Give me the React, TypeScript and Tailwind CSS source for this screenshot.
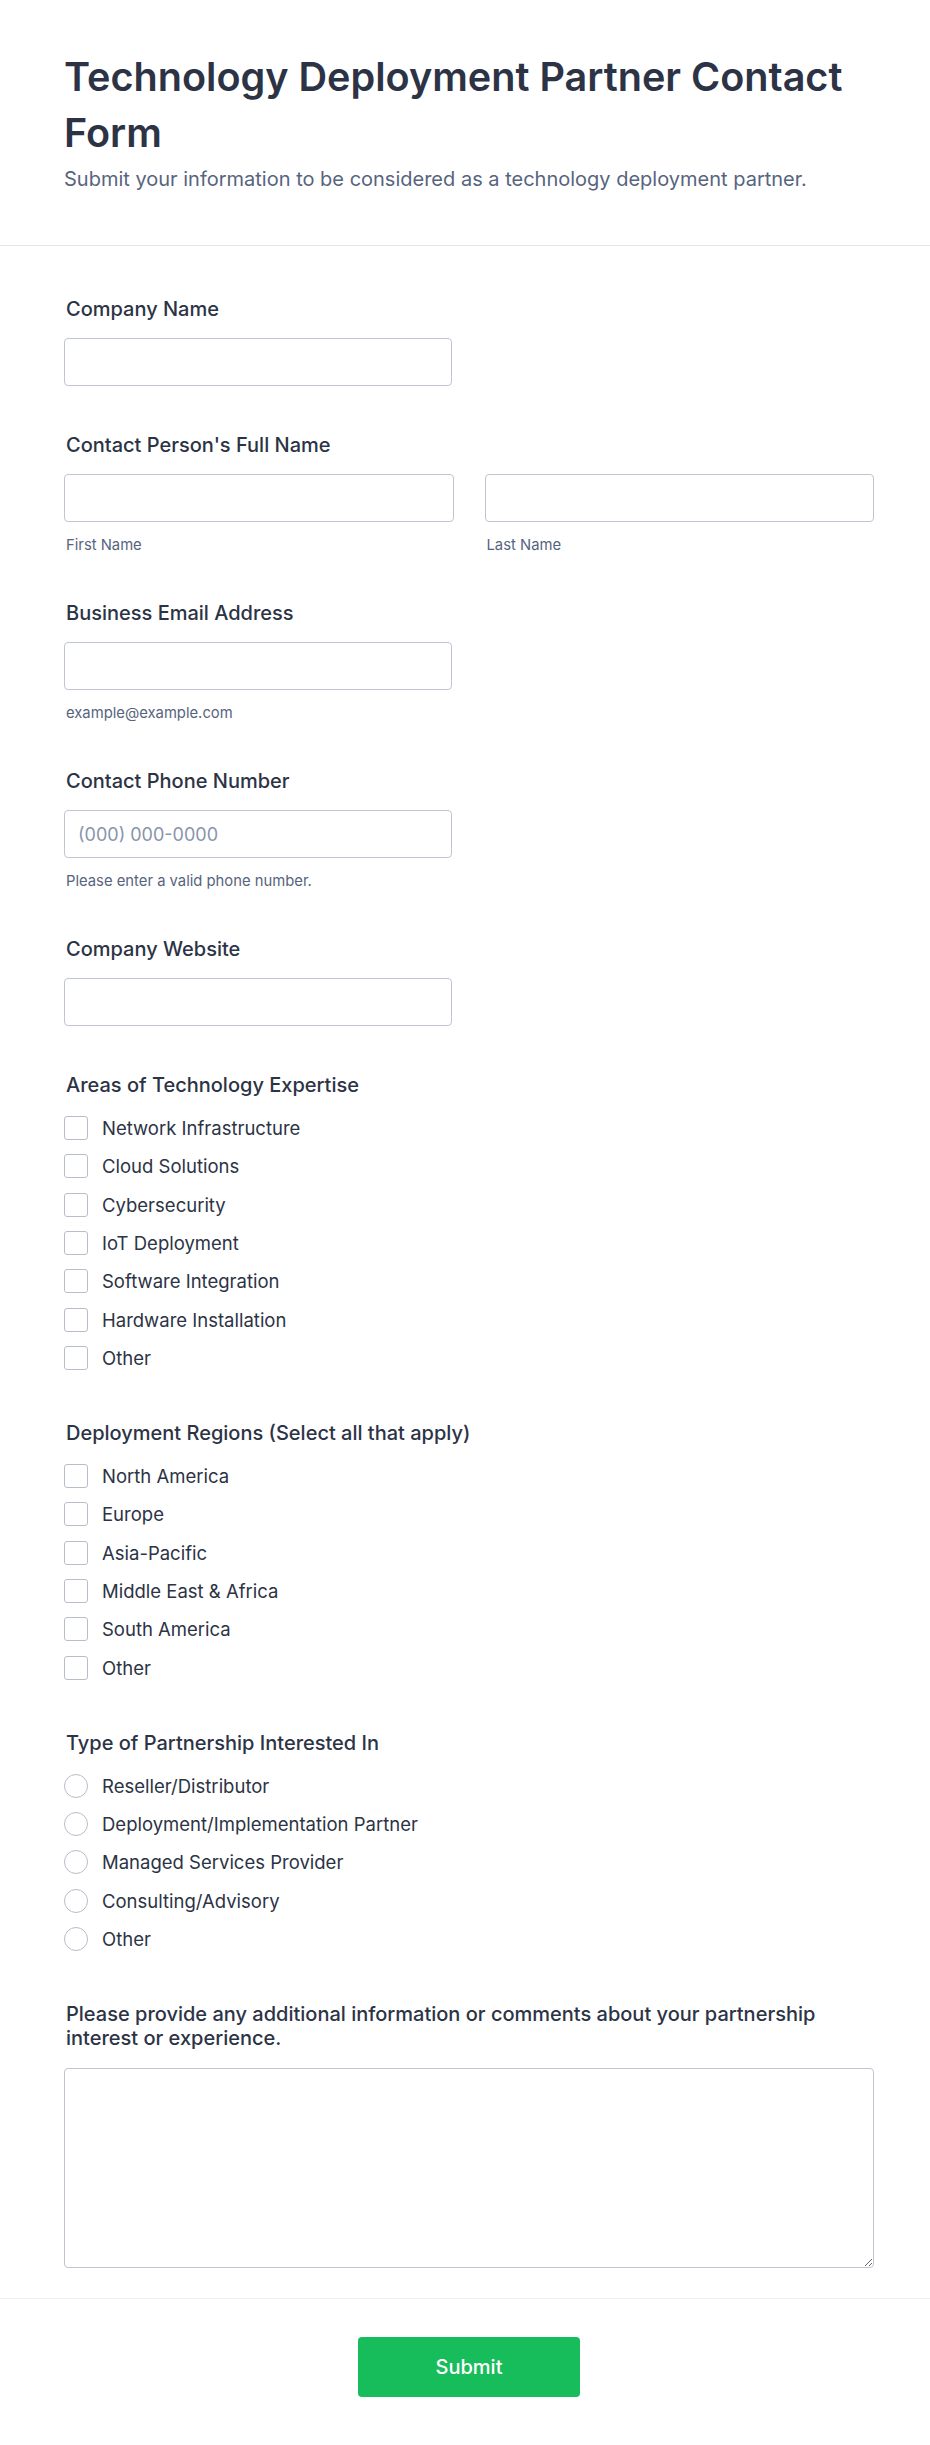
import React from 'react'

const expertise = [
  'Network Infrastructure',
  'Cloud Solutions',
  'Cybersecurity',
  'IoT Deployment',
  'Software Integration',
  'Hardware Installation',
  'Other',
]

const regions = ['North America', 'Europe', 'Asia-Pacific', 'Middle East & Africa', 'South America', 'Other']

const partnerships = [
  'Reseller/Distributor',
  'Deployment/Implementation Partner',
  'Managed Services Provider',
  'Consulting/Advisory',
  'Other',
]

function Label({ children }: { children: React.ReactNode }) {
  return <label className="block pl-[2px] text-[20px] leading-[24px] font-medium text-[#2c3345]">{children}</label>
}

function SubLabel({ children }: { children: React.ReactNode }) {
  return <div className="mt-[15px] pl-[2px] text-[14.8px] leading-[17px] text-[#57647e]">{children}</div>
}

function TextInput({ placeholder }: { placeholder?: string }) {
  return (
    <input
      type="text"
      placeholder={placeholder}
      className="block w-full h-[48px] px-[13px] rounded-[4px] border border-[#bfc4d0] bg-white text-[18px] text-[#2c3345] placeholder:text-[#8894ab] outline-none"
    />
  )
}

function Field({ label, sub, placeholder }: { label: string; sub?: string; placeholder?: string }) {
  return (
    <div>
      <Label>{label}</Label>
      <div className="mt-[17px] w-[388px]">
        <TextInput placeholder={placeholder} />
      </div>
      {sub && <SubLabel>{sub}</SubLabel>}
    </div>
  )
}

function OptionList({ items, kind }: { items: string[]; kind: 'checkbox' | 'radio' }) {
  return (
    <div className="mt-[19px] pb-[4px] flex flex-col gap-[14.33px]">
      {items.map((item) => (
        <label key={item} className="flex items-center gap-[14px] h-[24px]">
          <span
            className={`w-[24px] h-[24px] shrink-0 border border-[#b8bdc9] bg-white ${
              kind === 'radio' ? 'rounded-full' : 'rounded-[3px]'
            }`}
          />
          <span className="text-[18.5px] leading-[24px] text-[#2c3345]">{item}</span>
        </label>
      ))}
    </div>
  )
}

export default function App() {
  return (
    <div className="min-h-screen bg-white font-['Inter',sans-serif] text-[#2c3345]">
      {/* Header */}
      <header className="pt-[49px] pb-[52px] pl-[64px] pr-[56px] border-b border-[#e3e5ea]">
        <h1 className="text-[39.6px] leading-[56px] font-semibold text-[#2c3345]">
          Technology Deployment Partner Contact Form
        </h1>
        <p className="mt-[5px] text-[20px] leading-[27px] text-[#57647e]">
          Submit your information to be considered as a technology deployment partner.
        </p>
      </header>

      {/* Fields */}
      <form className="pt-[51px] pb-[30px] pl-[64px] pr-[56px] flex flex-col gap-[47px]">
        <Field label="Company Name" />

        <div>
          <Label>Contact Person's Full Name</Label>
          <div className="mt-[17px] grid grid-cols-2 gap-[31px]">
            <div>
              <TextInput />
              <SubLabel>First Name</SubLabel>
            </div>
            <div>
              <TextInput />
              <SubLabel>Last Name</SubLabel>
            </div>
          </div>
        </div>

        <Field label="Business Email Address" sub="example@example.com" />
        <Field label="Contact Phone Number" placeholder="(000) 000-0000" sub="Please enter a valid phone number." />
        <Field label="Company Website" />

        <div>
          <Label>Areas of Technology Expertise</Label>
          <OptionList items={expertise} kind="checkbox" />
        </div>

        <div>
          <Label>Deployment Regions (Select all that apply)</Label>
          <OptionList items={regions} kind="checkbox" />
        </div>

        <div>
          <Label>Type of Partnership Interested In</Label>
          <OptionList items={partnerships} kind="radio" />
        </div>

        <div>
          <Label>Please provide any additional information or comments about your partnership interest or experience.</Label>
          <textarea className="mt-[18px] block w-full h-[200px] p-[13px] rounded-[4px] border border-[#bfc4d0] bg-white text-[18px] outline-none" />
        </div>
      </form>

      {/* Submit */}
      <div className="border-t border-[#eceef3] pt-[38px] pb-[49px] pl-[64px] pr-[56px] flex justify-center">
        <button
          type="button"
          className="w-[222px] h-[60px] rounded-[4px] bg-[#18bd5b] text-white text-[20px] font-medium"
        >
          Submit
        </button>
      </div>
    </div>
  )
}
